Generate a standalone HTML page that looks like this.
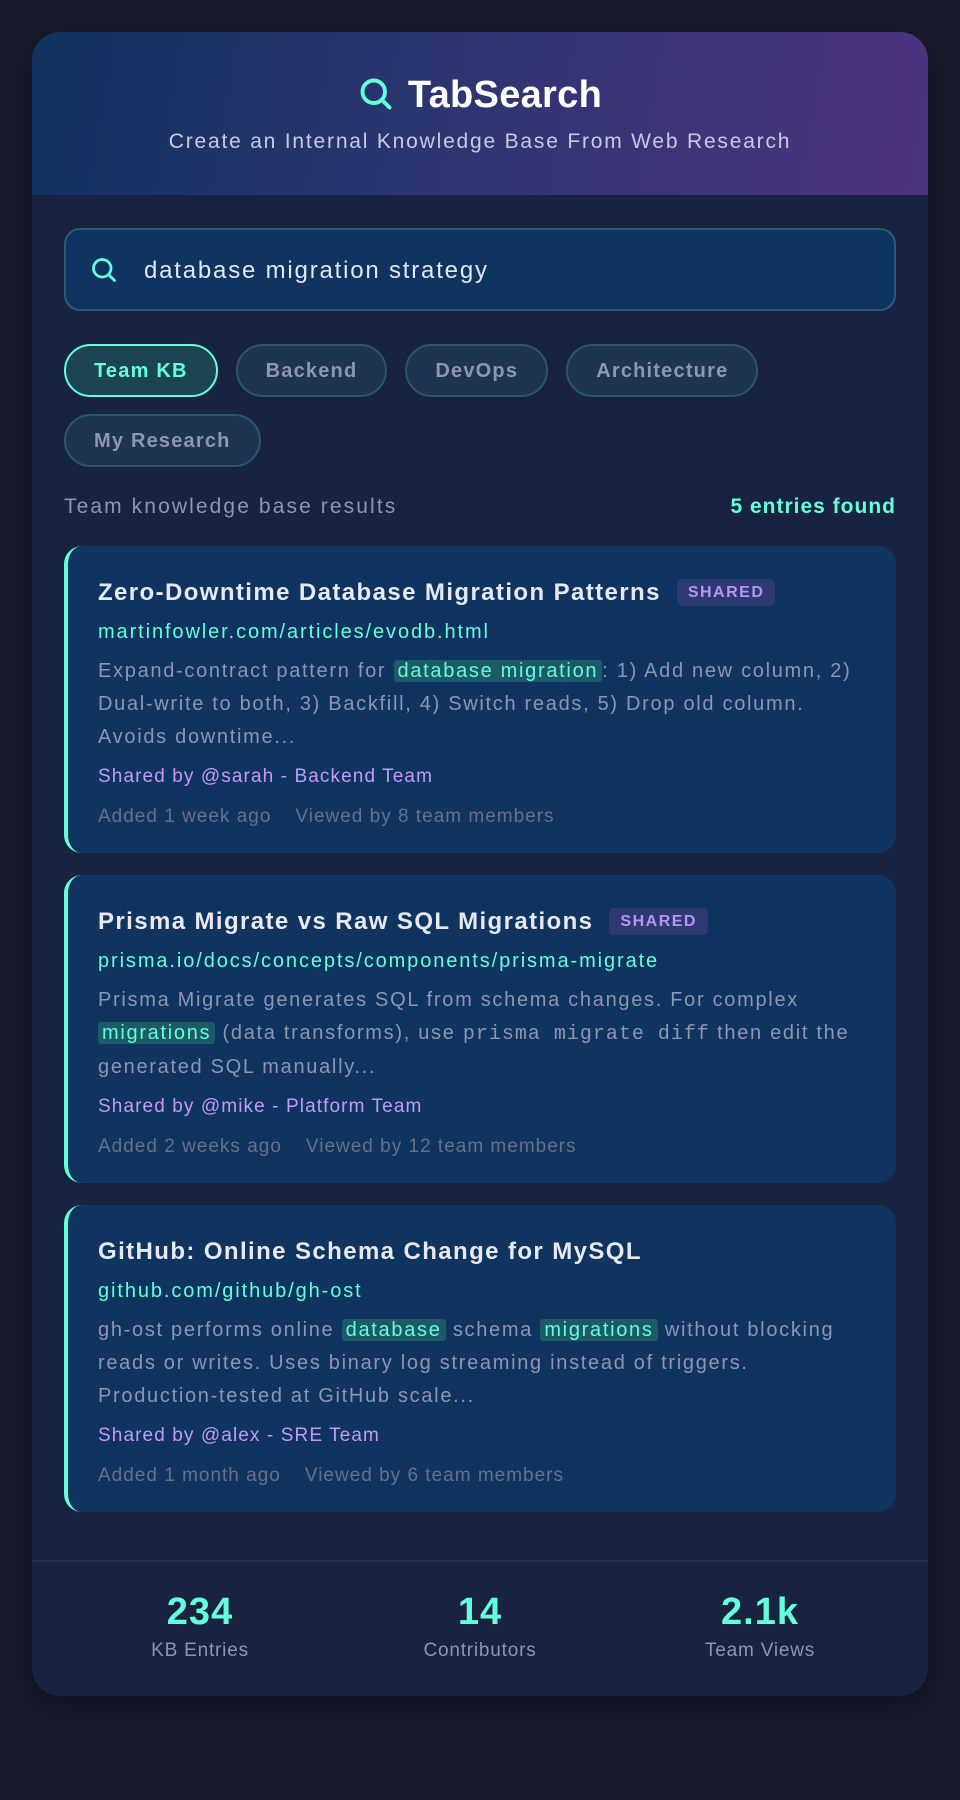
<!DOCTYPE html>
<html><head><meta charset="utf-8"><style>
*{box-sizing:border-box;margin:0;padding:0}
body{width:960px;height:1800px;background:#181a2b;font-family:"Liberation Sans",sans-serif;position:relative;overflow:hidden}
.wrap{position:absolute;left:32px;top:32px;width:896px;height:1664px;background:#172340;border-radius:28px;overflow:hidden;box-shadow:0 10px 30px rgba(0,0,0,.35)}
.hdr{height:163px;background:linear-gradient(100deg,#11325e 0%,#2c3570 45%,#4e3380 100%);position:relative;text-align:center}
.ttl{position:absolute;top:42px;left:0;right:0;font-size:38px;letter-spacing:.3px;font-weight:bold;color:#fff;line-height:42px}
.ttl svg{vertical-align:-5px;margin-right:14px}
.sub{position:absolute;top:97px;left:0;right:0;font-size:21px;letter-spacing:1.8px;color:#c9cbe0;line-height:26px}
.body{padding:33px 32px 0}
.search{height:83px;background:#0f3460;border:2px solid #2a5b77;border-radius:16px;position:relative}
.search svg{position:absolute;left:24px;top:26px}
.search span{position:absolute;left:78px;top:27px;font-size:24px;letter-spacing:1.8px;color:#e4e6f0;line-height:28px}
.chips{margin-top:33px;display:flex;flex-wrap:wrap;gap:17px 18px}
.chip{height:53px;border-radius:27px;border:2px solid #2b5863;background:#1d3550;color:#8f95b3;font-weight:bold;font-size:20px;letter-spacing:1.2px;line-height:51px;padding:0 28px}
.chip.on{border-color:#64ffda;background:#1d4452;color:#64ffda}
.rh{margin-top:25px;display:flex;justify-content:space-between;font-size:21px;letter-spacing:2.1px;line-height:30px}
.rh .l{color:#8f95b3}.rh .r{color:#64ffda;font-weight:bold;letter-spacing:1px}
.card{margin-top:22px;background:#0f3460;border-radius:18px;border-left:4px solid #64ffda;padding:33px 32px 24px 30px}
.rh+.card{margin-top:24px}
.ct{font-size:24px;letter-spacing:1.4px;font-weight:bold;color:#e8e8f0;line-height:28px;margin-bottom:12px}
.badge{display:inline-block;background:#2d3a72;color:#b794f6;font-size:16px;font-weight:bold;padding:4px 11px;border-radius:5px;margin-left:16px;vertical-align:3px;line-height:19px;letter-spacing:1.5px}
.url{color:#64ffda;font-size:20px;letter-spacing:1.9px;line-height:26px;margin-bottom:10px}
.desc{color:#8f95b3;font-size:20px;letter-spacing:1.7px;line-height:33px}
.hl{background:#1d5a68;color:#64ffda;padding:0 4px;border-radius:3px}
.mono{font-family:"Liberation Mono",monospace;font-size:20px;letter-spacing:1px}
.by{color:#c39bf5;font-size:19px;letter-spacing:1.1px;line-height:26px;margin-top:10px}
.meta{color:#67708a;font-size:19px;letter-spacing:1px;line-height:24px;margin-top:15px}
.meta span{margin-right:24px}
.foot{position:absolute;left:0;right:0;top:1528px;border-top:2px solid #22304e;height:136px;display:flex;padding:0 28px}
.st{flex:1;text-align:center;padding-top:30px}
.st b{display:block;color:#64ffda;font-size:38px;letter-spacing:1px;line-height:40px}
.st span{display:block;color:#8f95b3;font-size:19px;letter-spacing:.8px;line-height:26px;margin-top:6px}
</style></head><body>
<div class="wrap">
<div class="hdr">
<div class="ttl"><svg width="36" height="36" viewBox="0 0 24 24" fill="none" stroke="#64ffda" stroke-width="2.6" stroke-linecap="round"><circle cx="10.5" cy="10.5" r="7.5"/><path d="M16 16l5 5"/></svg>TabSearch</div>
<div class="sub">Create an Internal Knowledge Base From Web Research</div>
</div>
<div class="body">
<div class="search"><svg width="28" height="28" viewBox="0 0 24 24" fill="none" stroke="#64ffda" stroke-width="2.4" stroke-linecap="round"><circle cx="10.5" cy="10.5" r="7.5"/><path d="M16 16l5 5"/></svg><span>database migration strategy</span></div>
<div class="chips"><div class="chip on">Team KB</div><div class="chip">Backend</div><div class="chip">DevOps</div><div class="chip">Architecture</div><div class="chip">My Research</div></div>
<div class="rh"><span class="l">Team knowledge base results</span><span class="r">5 entries found</span></div>
<div class="card">
<div class="ct">Zero-Downtime Database Migration Patterns<span class="badge">SHARED</span></div>
<div class="url">martinfowler.com/articles/evodb.html</div>
<div class="desc">Expand-contract pattern for <span class="hl">database migration</span>: 1) Add new column, 2) Dual-write to both, 3) Backfill, 4) Switch reads, 5) Drop old column. Avoids downtime...</div>
<div class="by">Shared by @sarah - Backend Team</div>
<div class="meta"><span>Added 1 week ago</span><span>Viewed by 8 team members</span></div>
</div>
<div class="card">
<div class="ct">Prisma Migrate vs Raw SQL Migrations<span class="badge">SHARED</span></div>
<div class="url">prisma.io/docs/concepts/components/prisma-migrate</div>
<div class="desc">Prisma Migrate generates SQL from schema changes. For complex <span class="hl">migrations</span> (data transforms), use <span class="mono">prisma migrate diff</span> then edit the generated SQL manually...</div>
<div class="by">Shared by @mike - Platform Team</div>
<div class="meta"><span>Added 2 weeks ago</span><span>Viewed by 12 team members</span></div>
</div>
<div class="card">
<div class="ct">GitHub: Online Schema Change for MySQL</div>
<div class="url">github.com/github/gh-ost</div>
<div class="desc">gh-ost performs online <span class="hl">database</span> schema <span class="hl">migrations</span> without blocking reads or writes. Uses binary log streaming instead of triggers. Production-tested at GitHub scale...</div>
<div class="by">Shared by @alex - SRE Team</div>
<div class="meta"><span>Added 1 month ago</span><span>Viewed by 6 team members</span></div>
</div>
</div>
<div class="foot">
<div class="st"><b>234</b><span>KB Entries</span></div>
<div class="st"><b>14</b><span>Contributors</span></div>
<div class="st"><b>2.1k</b><span>Team Views</span></div>
</div>
</div>
</body></html>
